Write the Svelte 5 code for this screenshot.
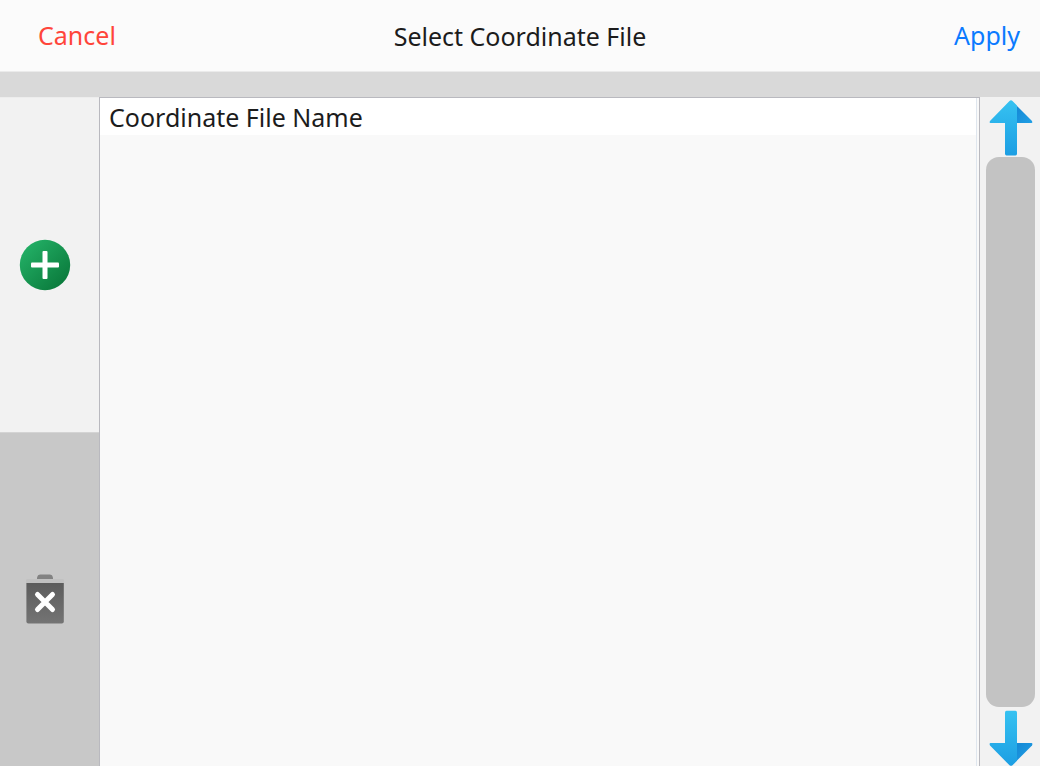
<script>
  let files = $state([]);
</script>

<div class="page">
  <header class="bar">
    <button class="text-btn cancel" type="button">Cancel</button>
    <h1>Select Coordinate File</h1>
    <button class="text-btn apply" type="button">Apply</button>
  </header>

  <div class="band"></div>

  <main>
    <nav class="tools" aria-label="File actions">
      <button class="tool" type="button" aria-label="Add file">
        <svg width="52" height="52" viewBox="0 0 52 52" aria-hidden="true">
          <defs>
            <linearGradient id="green" x1="0" y1="0" x2="1" y2="1">
              <stop offset="0.1" stop-color="#23b066" />
              <stop offset="0.9" stop-color="#0a793b" />
            </linearGradient>
          </defs>
          <circle cx="26" cy="26" r="25.2" fill="url(#green)" />
          <rect x="12" y="23.5" width="28" height="5" rx="1" fill="#fff" />
          <rect x="23.5" y="12" width="5" height="28" rx="1" fill="#fff" />
        </svg>
      </button>
      <button class="tool remove" type="button" aria-label="Delete file" disabled>
        <svg width="38" height="50" viewBox="0 0 38 50" aria-hidden="true">
          <defs>
            <linearGradient id="bin" x1="0" y1="0" x2="0" y2="1">
              <stop offset="0" stop-color="#5c5c5c" />
              <stop offset="1" stop-color="#747474" />
            </linearGradient>
          </defs>
          <path d="M11 5V3.4Q11.6 .8 14 .5H24Q26.4 .8 27 3.4V5Z" fill="#828282" />
          <path d="M0 9V6.5Q0 5 1.5 5H36.5Q38 5 38 6.5V9Z" fill="#c1c1c1" />
          <path d="M.4 9H37.8V47.5Q37.8 49.6 35.8 49.6H2.4Q.4 49.6 .4 47.5Z" fill="url(#bin)" />
          <path d="M11.5 20.5L26.5 35.500M26.5 20.5L11.5 35.5" stroke="#fff" stroke-width="5" stroke-linecap="round" />
        </svg>
      </button>
    </nav>

    <section class="list">
      <div class="rows">
        <table>
          <thead>
            <tr><th scope="col">Coordinate File Name</th></tr>
          </thead>
          <tbody>
            {#each files as file}
              <tr><td>{file}</td></tr>
            {/each}
          </tbody>
        </table>
      </div>
    </section>

    <div class="scroll">
      <button class="arrow" type="button" aria-label="Scroll up">
        <svg width="44" height="56" viewBox="0 0 44 56" aria-hidden="true">
          <defs>
            <linearGradient id="up" x1="0" y1="0" x2="0" y2="1">
              <stop offset="0" stop-color="#36c2f1" />
              <stop offset="1" stop-color="#1c9ee3" />
            </linearGradient>
            <linearGradient id="fold" x1="0" y1="0" x2="1" y2="1">
              <stop offset="0" stop-color="#1588d5" />
              <stop offset="1" stop-color="#209fe5" />
            </linearGradient>
          </defs>
          <path d="M28 6L43 21Q44 23 42.5 23H28Z" fill="url(#fold)" />
          <path d="M20.5 .9Q22 -.2 23.5 .9L28 5.5V53.5Q28 55.500 26.5 55.5H17.5Q16 55.5 16 53.5V23H1.5Q0 23 1 21Z" fill="url(#up)" />
        </svg>
      </button>
      <div class="thumb"></div>
      <button class="arrow" type="button" aria-label="Scroll down">
        <svg width="44" height="56" viewBox="0 0 44 56" aria-hidden="true">
          <path d="M28 50.5L43 35.500Q44 33 42.5 33H28Z" fill="url(#fold)" />
          <path d="M20.5 55.3Q22 56.4 23.5 55.3L28 50.8V2.7Q28 .7 26.5 .7H17.500Q16 .7 16 2.7V33H1.5Q0 33 1 35.5Z" fill="url(#up)" />
        </svg>
      </button>
    </div>
  </main>
</div>

<style>
  :global(body) {
    margin: 0;
  }

  .page {
    display: flex;
    flex-direction: column;
    min-height: 100vh;
    background: #f2f2f2;
    color: #1c1c1c;
    font-family: "Noto Sans", "Open Sans", sans-serif;
    font-size: 25px;
  }

  button {
    margin: 0;
    padding: 0;
    border: 0;
    background: none;
    font: inherit;
  }

  svg {
    display: block;
  }

  .bar {
    display: grid;
    grid-template-columns: 1fr auto 1fr;
    align-items: center;
    box-sizing: border-box;
    height: 72px;
    padding: 0 20px 0 38px;
    background: #fbfbfb;
    border-bottom: 1px solid #ebebeb;
  }

  h1 {
    margin: 0;
    padding-right: 18px;
    font-size: 25px;
    font-weight: 400;
    line-height: 34px;
  }

  .text-btn {
    padding-bottom: 2px;
    line-height: 34px;
  }

  .cancel {
    justify-self: start;
    color: #ff453a;
  }

  .apply {
    justify-self: end;
    color: #0a7aff;
  }

  .band {
    height: 25px;
    background: #d9d9d9;
  }

  main {
    flex: 1;
    display: grid;
    grid-template-columns: 99px 1fr 60px;
  }

  .tools {
    display: grid;
    grid-template-rows: 1fr 1fr;
  }

  .tool {
    display: grid;
    place-items: center;
    padding-right: 9px;
    border-top: 1px solid #ededed;
  }

  .remove {
    background: #c8c8c8;
    border-top-color: #d4d4d4;
  }

  .list {
    display: grid;
    padding-right: 2px;
    background: #f9f9f9;
    border: solid #b9b9bf;
    border-width: 1px 1px 0;
  }

  .rows {
    border-right: 1px solid #dfe6ee;
  }

  table {
    width: 100%;
    border-collapse: collapse;
  }

  th {
    padding: 2px 9px 0;
    background: #fff;
    font-weight: 400;
    line-height: 35px;
    text-align: left;
  }

  .scroll {
    display: flex;
    flex-direction: column;
    align-items: center;
    padding: 3px 5px 0 6px;
  }

  .thumb {
    flex: 1;
    width: 100%;
    margin: 1px 0 3px;
    background: #c3c3c3;
    border-radius: 13px;
  }
</style>
